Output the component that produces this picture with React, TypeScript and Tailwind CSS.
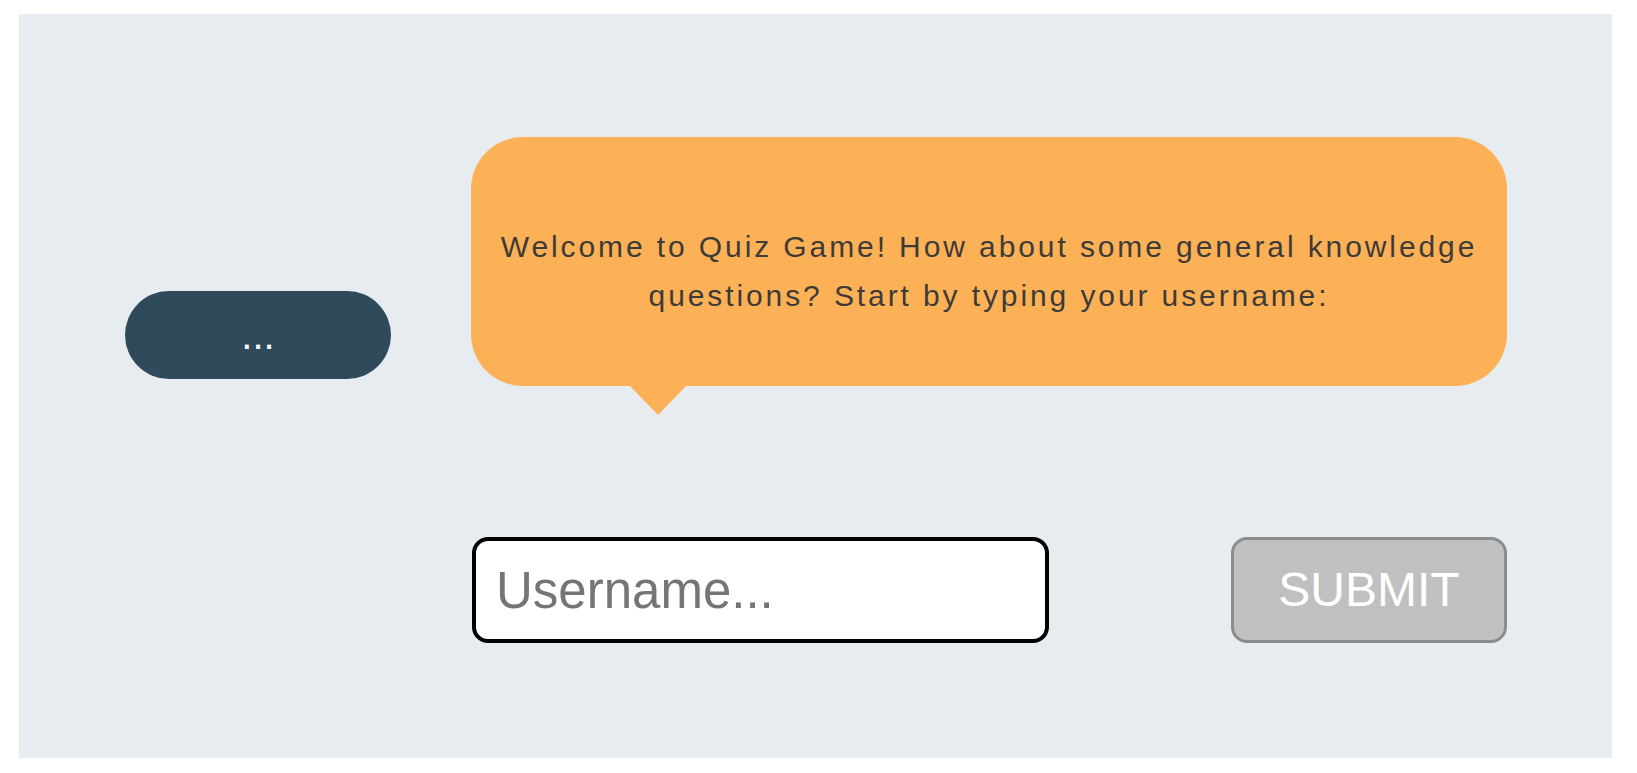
export default function App() {
  return (
    <div className="w-full min-h-[773px] bg-white pt-[14px] pl-[19px] font-['Liberation_Sans',Arial,sans-serif]">
      <div className="w-[1593px] h-[744px] bg-[#e7ecf0] pt-[123px]">
        {/* chat row */}
        <div className="flex items-start">
          <div className="ml-[106px] mt-[154px] w-[266px] h-[88px] rounded-full bg-[#2e4a5b] flex items-center justify-center text-white text-[40px] leading-none">
            ...
          </div>
          <div className="relative ml-[80px] w-[1036px] h-[249px] rounded-[52px] bg-[#fdb156] flex items-center justify-center pt-[18px] px-6">
            <p className="text-center text-[30px] leading-[49px] tracking-[2.9px] text-[#3d3b38]">
              Welcome to Quiz Game! How about some general knowledge
              <br />
              questions? Start by typing your username:
            </p>
            <div className="absolute left-[159px] top-full w-0 h-0 border-l-[28px] border-r-[28px] border-t-[29px] border-l-transparent border-r-transparent border-t-[#fdb156]" />
          </div>
        </div>

        {/* input row */}
        <div className="flex items-start mt-[151px] ml-[453px]">
          <input
            type="text"
            placeholder="Username..."
            className="w-[577px] h-[106px] bg-white border-4 border-black rounded-[16px] pl-[20px] text-[51px] text-black placeholder:text-[#757575] outline-none"
          />
          <button className="ml-[182px] w-[276px] h-[106px] bg-[#c0c0c0] border-[3.5px] border-[#8b8c8e] rounded-[16px] text-white text-[48px] leading-none">
            SUBMIT
          </button>
        </div>
      </div>
    </div>
  )
}
